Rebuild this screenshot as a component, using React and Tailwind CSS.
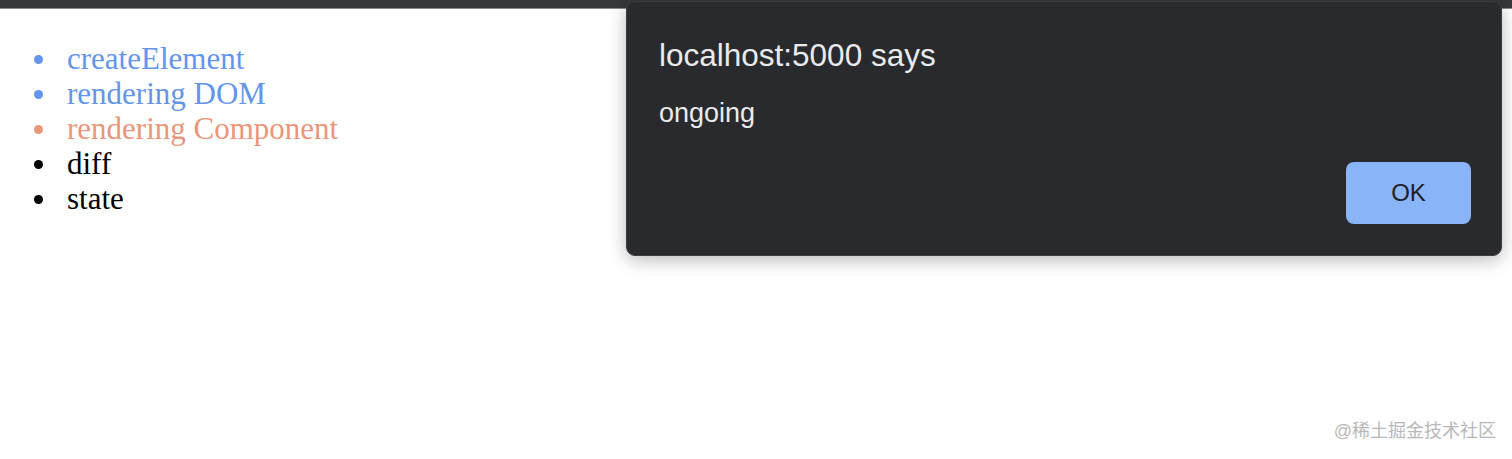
const items = [
    { label: "createElement", color: "text-[#6495ed]" },
    { label: "rendering DOM", color: "text-[#6495ed]" },
    { label: "rendering Component", color: "text-[#e9967a]" },
    { label: "diff", color: "text-black" },
    { label: "state", color: "text-black" },
]

const AlertDialog = () => {
    return (
        <div className="absolute left-[626px] top-[1px] w-[876px] h-[255px] flex flex-col pl-[32px] pr-[30px] pt-[35px] rounded-[9px] bg-[#292a2d] border border-[#3c3d41] shadow-[0_4px_18px_rgba(0,0,0,0.28)] font-['Liberation_Sans',Arial,sans-serif] text-[#e8eaed]">
            <p className="text-[31.5px] leading-[36px]">localhost:5000 says</p>
            <p className="mt-[24px] text-[27px] leading-[32px]">ongoing</p>
            <div className="flex justify-end mt-[33px]">
                <button className="w-[125px] h-[62px] rounded-[8px] bg-[#8ab4f8] text-[#202124] text-[24px]">OK</button>
            </div>
        </div>
    )
}

const App = () => {
    return (
        <div className="relative w-[1512px] h-[459px] bg-white overflow-hidden">
            <div className="h-[9px] bg-[#37383c] border-b border-[#8a8a8a]"></div>
            <ul className="flex flex-col pl-[34px] pt-[32px] font-['Liberation_Serif','Times_New_Roman',serif] text-[31px] leading-[35px]">
                {items.map(item => (
                    <li key={item.label} className={`flex items-center ${item.color}`}>
                        <span className="w-[9px] h-[9px] rounded-full bg-current mr-[24px] mt-[2px]"></span>
                        {item.label}
                    </li>
                ))}
            </ul>
            <AlertDialog />
            <p className="absolute right-[16px] bottom-[14px] text-[18px] text-[#b8b8b8] font-['Liberation_Sans','Noto_Sans_CJK_SC',sans-serif]">@稀土掘金技术社区</p>
        </div>
    )
}

export default App
